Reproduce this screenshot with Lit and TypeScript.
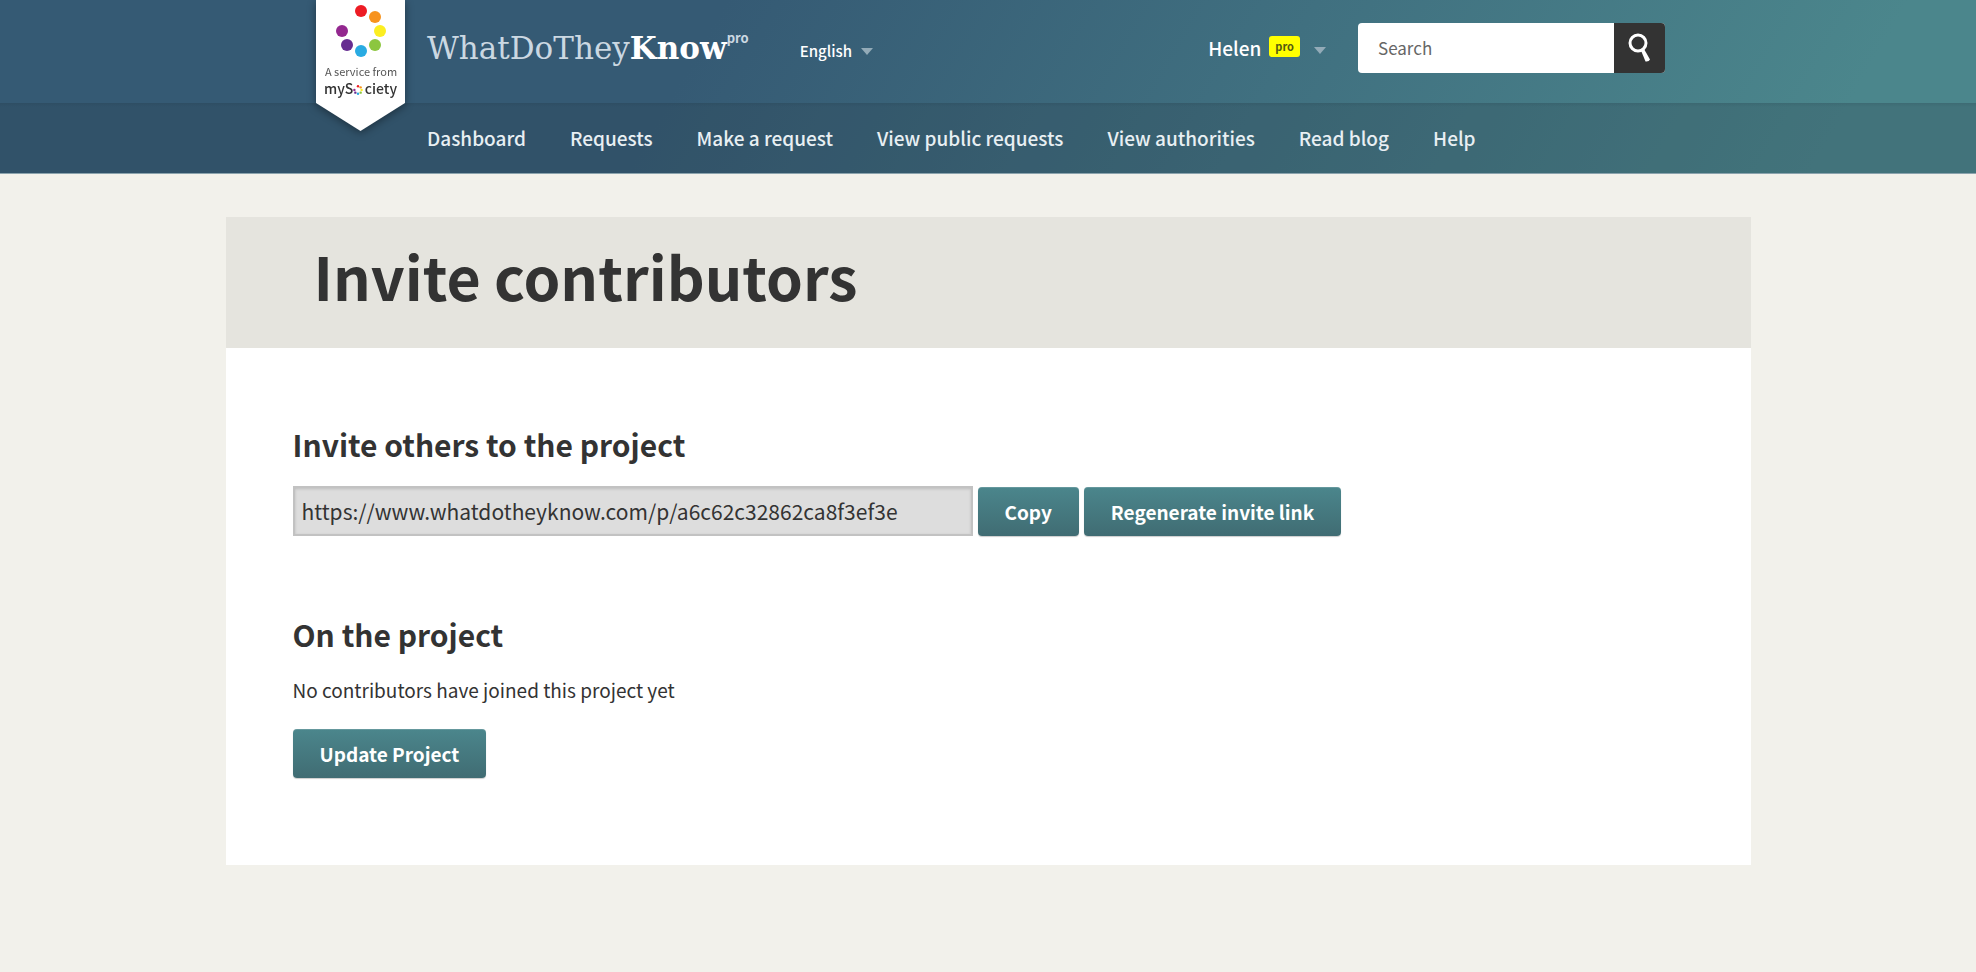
import { LitElement, html, svg, css } from "lit";
import { customElement, property, state } from "lit/decorators.js";

const FONT = css`"Noto Sans CJK SC", "Open Sans", sans-serif`;

@customElement("site-badge")
class SiteBadge extends LitElement {
  static styles = css`
    :host { display: block; }
    .badge { display: block; filter: drop-shadow(0 2px 4px rgba(0, 0, 0, 0.4)); }
    text { font-family: ${FONT}; }
    .small { font-size: 11px; fill: #555; }
    .brand { font-size: 14px; font-weight: 500; fill: #333; }
  `;
  render() {
    const dots: [number, number, string][] = [
      [45, 11, "#ed1c24"], [59, 17, "#f7931e"], [64, 31, "#fcee21"], [59, 45, "#8cc63f"],
      [45, 51, "#29abe2"], [31, 45, "#662d91"], [26, 31, "#93278f"],
    ];
    return html`<a href="#" aria-label="A service from mySociety">
      <svg class="badge" width="89" height="131" viewBox="0 0 89 131">
        <path d="M0 0H89V103L44.500 131L0 103Z" fill="#fff"/>
        ${dots.map(([x, y, c]) => svg`<circle cx=${x} cy=${y} r="6" fill=${c}/>`)}
        <text class="small" x="45" y="76" text-anchor="middle">A service from</text>
        <text class="brand" x="8" y="94">myS</text>
        ${dots.map(([x, y, c]) => svg`<circle cx=${42 + (x - 45) * 0.19} cy=${90 + (y - 31) * 0.19} r="1.200" fill=${c}/>`)}
        <text class="brand" x="81" y="94" text-anchor="end">ciety</text>
      </svg></a>`;
  }
}

@customElement("site-header")
class SiteHeader extends LitElement {
  @property({ attribute: false }) links: string[] = [];
  static styles = css`
    :host { display: block; font-family: ${FONT}; }
    .header {
      background: linear-gradient(120deg, #355a74 35%, #4b868c 92%);
      border-bottom: 1px solid #8ba3ad;
    }
    .inner { box-sizing: border-box; max-width: 1354px; margin: 0 auto; padding-left: 116px; position: relative; }
    .badge { position: absolute; left: 5px; top: 0; z-index: 1; }
    .top { height: 103px; display: flex; align-items: flex-start; }
    .logo {
      font-family: "DejaVu Serif", serif; font-size: 31px; line-height: 40px;
      margin-top: 28px; color: #cbd8e2; text-decoration: none; display: flex;
    }
    .logo b { color: #fff; }
    .logo .sup { font-family: ${FONT}; font-size: 13px; line-height: 20px; font-weight: 700; }
    button { font-family: ${FONT}; color: #fff; background: none; border: 0; padding: 0; display: flex; align-items: center; cursor: pointer; }
    .caret { border: 6px solid transparent; border-top: 7px solid #93abb8; border-bottom: 0; }
    .lang { font-size: 15px; font-weight: 500; line-height: 20px; margin: 41px 0 0 51px; gap: 9px; }
    .user { font-size: 19px; font-weight: 500; line-height: 26px; margin: 35px 32px 0 auto; }
    .user .pro { font-size: 11px; line-height: 21px; padding: 0 6px; border-radius: 3px; background: #ff0; color: #555a10; font-weight: 700; margin: 0 14px 3px 8px; }
    .user .caret { margin-top: 4px; }
    .search { display: flex; margin-top: 23px; height: 50px; width: 307px; border-radius: 4px; overflow: hidden; background: #fff; }
    .search input { flex: 1; min-width: 0; border: 0; padding: 0 20px; font: 17px/24px ${FONT}; color: #333; background: none; outline: 0; }
    .search input::placeholder { color: #666; opacity: 1; }
    .search button { width: 51px; background: #333; justify-content: center; }
    .bar { background: linear-gradient(rgba(20, 40, 50, 0.1), transparent 4px), rgba(40, 60, 70, 0.25); }
    .nav { display: flex; gap: 44px; height: 70px; align-items: center; }
    .nav a { color: #e8eff3; text-decoration: none; font-size: 19px; font-weight: 500; line-height: 28px; white-space: nowrap; }
  `;
  render() {
    return html`<header class="header">
      <div class="inner top">
        <site-badge class="badge"></site-badge>
        <a class="logo" href="#">WhatDoThey<b>Know</b><span class="sup">pro</span></a>
        <button class="lang" type="button">English <span class="caret"></span></button>
        <button class="user" type="button">Helen <span class="pro">pro</span><span class="caret"></span></button>
        <form class="search" role="search">
          <input type="search" placeholder="Search" aria-label="Search" />
          <button type="button" aria-label="Submit search">
            <svg width="26" height="32" viewBox="0 0 26 32">
              <circle cx="11" cy="11" r="8" fill="none" stroke="#fff" stroke-width="3"/>
              <path d="M14 18.500L17 17L23 27.500Q22 30 18.500 29.500Z" fill="#fff"/>
            </svg>
          </button>
        </form>
      </div>
      <div class="bar"><nav class="inner nav">${this.links.map((l) => html`<a href="#">${l}</a>`)}</nav></div>
    </header>`;
  }
}

@customElement("app-root")
class AppRoot extends LitElement {
  @state() private link = "https://www.whatdotheyknow.com/p/a6c62c32862ca8f3ef3e";
  static styles = css`
    :host { display: block; min-height: 100vh; background: #f2f1eb; color: #333; font-family: ${FONT}; }
    .page { max-width: 1525px; margin: 43px auto 0; background: #fff; }
    .title { background: #e5e4de; padding: 19px 88px 32px; }
    h1 { margin: 0; font-size: 59px; line-height: 80px; font-weight: 700; }
    .content { padding: 76px 67px 87px; }
    h2 { margin: 0; font-size: 30px; line-height: 40px; font-weight: 700; }
    .invite { display: flex; align-items: flex-end; gap: 5px; margin: 22px 0 78px; }
    .invite input {
      box-sizing: border-box; width: 680px; height: 50px; border: 2px solid #c2c2c2; padding: 0 7px;
      font: 21px/28px ${FONT}; color: #333; background: #ddd; box-shadow: inset 0 1px 3px rgba(0, 0, 0, 0.15);
    }
    .btn {
      border: 0; border-radius: 4px; height: 49px; padding: 0 27px; cursor: pointer;
      font: 700 19px/28px ${FONT}; color: #fff; background: linear-gradient(#4b868c, #406c73);
      box-shadow: inset 0 1px 0 rgba(255, 255, 255, 0.15), 0 1px 1px rgba(0, 0, 0, 0.2);
    }
    p { margin: 22px 0 25px; font-size: 19px; line-height: 28px; }
  `;
  render() {
    return html`
      <site-header .links=${["Dashboard", "Requests", "Make a request", "View public requests", "View authorities", "Read blog", "Help"]}></site-header>
      <main class="page">
        <div class="title"><h1>Invite contributors</h1></div>
        <div class="content">
          <h2><label for="link">Invite others to the project</label></h2>
          <div class="invite">
            <input id="link" type="text" readonly .value=${this.link} />
            <button class="btn" type="button">Copy</button>
            <button class="btn" type="button">Regenerate invite link</button>
          </div>
          <h2>On the project</h2>
          <p>No contributors have joined this project yet</p>
          <button class="btn" type="button">Update Project</button>
        </div>
      </main>`;
  }
}
